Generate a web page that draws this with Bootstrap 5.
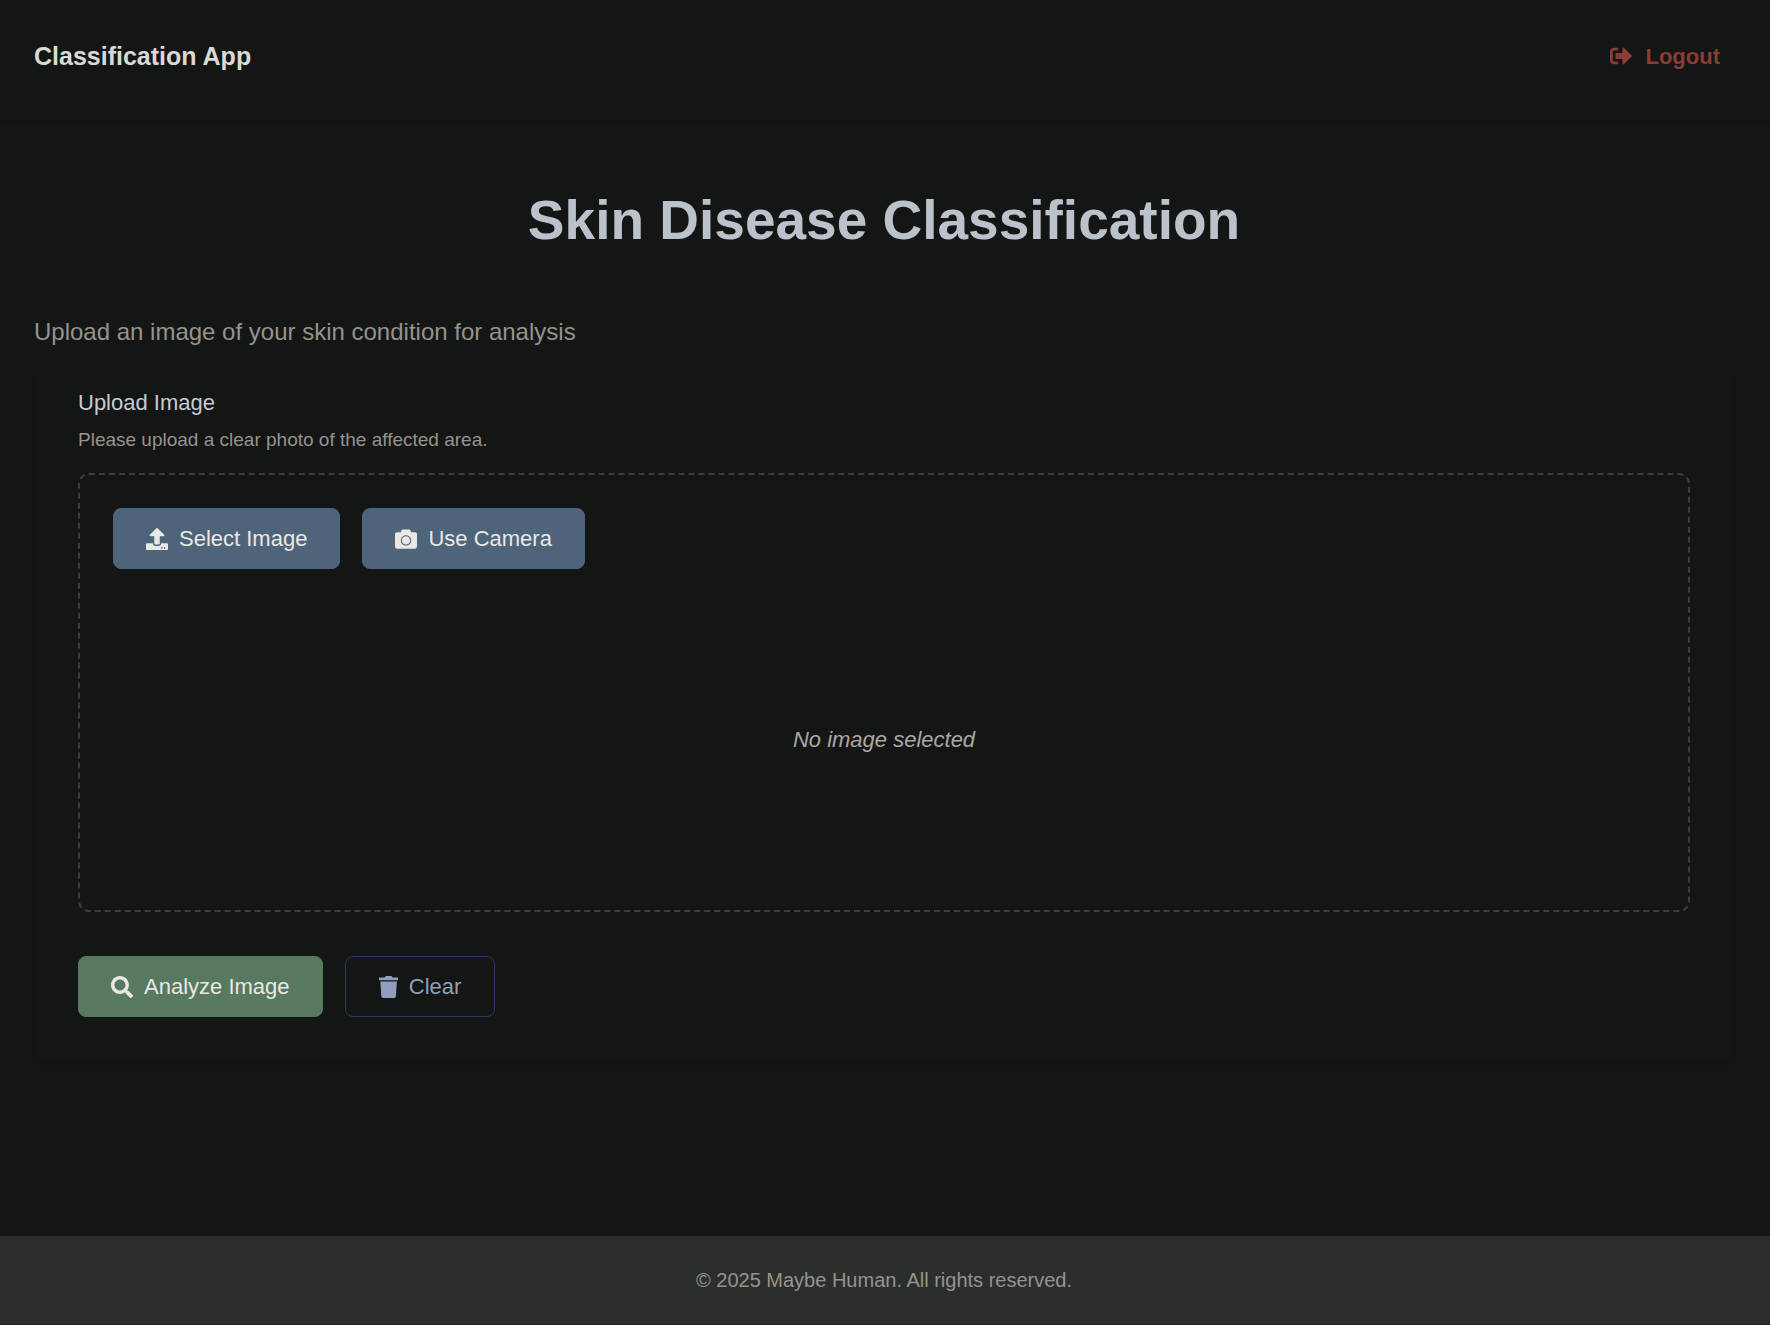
<!DOCTYPE html>
<html lang="en" data-bs-theme="dark">
<head>
<meta charset="utf-8">
<meta name="viewport" content="width=device-width, initial-scale=1">
<title>Skin Disease Classification</title>
<link href="https://cdn.jsdelivr.net/npm/bootstrap@5.3.0/dist/css/bootstrap.min.css" rel="stylesheet">
<style>
body { font-family: "Liberation Sans", Arial, sans-serif; font-size: 22px; line-height: 33px; background: #141615; color: #96938d; }
.app-nav { height: 120px; padding: 0 36px 8px 34px; box-shadow: 0 2px 4px rgba(0, 0, 0, .3); }
.app-brand { font-size: 25px; color: #dbd9d6; }
.logout-link { color: #8c3c35; padding: 0 14px; gap: 13px; }
.glyph { height: 22px; width: auto; fill: currentColor; flex: none; }
.page-main { padding: 67px 36px 0 34px; }
.page-title { font-size: 55px; line-height: 66px; color: #bcc2cc; margin-bottom: 61px; }
.page-intro { font-size: 24px; line-height: 36px; margin-bottom: 8px; }
.upload-card { padding: 28px 44px 44px; border-radius: 16px; box-shadow: 0 4px 12px rgba(0, 0, 0, .12); }
.upload-title { font-size: 22px; line-height: 33px; color: #c3cbd6; margin-bottom: 7px; }
.upload-hint { font-size: 19px; line-height: 28px; margin-bottom: 19px; }
.drop-zone { border: 2px dashed #3b3e3d; border-radius: 11px; padding: 33px; margin-bottom: 44px; }
.preview-area { min-height: 275px; margin-top: 33px; color: #aaa8a3; }
.btn-row { gap: 22px; }
.app-btn { display: inline-flex; align-items: center; gap: 11px; font-size: 22px; line-height: 33px; padding: 13px 32px; border-radius: 8px; }
.btn-pick { --bs-btn-color: #eae8e4; --bs-btn-bg: #4d647b; --bs-btn-border-color: #4d647b; --bs-btn-hover-bg: #435870; --bs-btn-hover-color: #fff; }
.btn-run { --bs-btn-color: #eae8e4; --bs-btn-bg: #587960; --bs-btn-border-color: #587960; --bs-btn-hover-bg: #4c6a54; --bs-btn-hover-color: #fff; }
.btn-wipe { --bs-btn-color: #8f9fbd; --bs-btn-border-color: #2e3566; --bs-btn-hover-bg: #1d2140; --bs-btn-hover-color: #b4c0d8; padding: 13px 33px; }
.app-footer { background: #2c2e2d; font-size: 20px; line-height: 30px; padding: 29px 36px 29px 34px; border-bottom: 1px solid #1e201f; }
</style>
<script defer src="https://cdn.jsdelivr.net/npm/bootstrap@5.3.0/dist/js/bootstrap.bundle.min.js"></script>
</head>
<body class="d-flex flex-column min-vh-100">
<nav class="app-nav d-flex align-items-center justify-content-between">
  <a class="app-brand fw-bold text-decoration-none" href="#">Classification App</a>
  <a class="logout-link d-flex align-items-center fw-bold text-decoration-none" href="#">
    <svg class="glyph" viewBox="0 0 512 512" aria-hidden="true"><path d="M497 273L329 441c-15 15-41 4.5-41-17v-96H152c-13.3 0-24-10.7-24-24v-96c0-13.3 10.7-24 24-24h136V88c0-21.4 25.9-32 41-17l168 168c9.3 9.4 9.3 24.6 0 34zM192 436v-40c0-6.6-5.4-12-12-12H96c-17.7 0-32-14.3-32-32V160c0-17.7 14.3-32 32-32h84c6.6 0 12-5.4 12-12V76c0-6.6-5.4-12-12-12H96c-53 0-96 43-96 96v192c0 53 43 96 96 96h84c6.6 0 12-5.4 12-12z"/></svg>
    <span>Logout</span>
  </a>
</nav>
<main class="page-main flex-grow-1">
  <h1 class="page-title fw-bold text-center">Skin Disease Classification</h1>
  <p class="page-intro">Upload an image of your skin condition for analysis</p>
  <section class="upload-card">
    <h2 class="upload-title fw-normal">Upload Image</h2>
    <p class="upload-hint">Please upload a clear photo of the affected area.</p>
    <div class="drop-zone">
      <div class="btn-row d-flex flex-wrap">
        <button type="button" class="btn app-btn btn-pick">
          <svg class="glyph" viewBox="0 0 512 512" aria-hidden="true"><path d="M296 384h-80c-13.3 0-24-10.7-24-24V192h-87.7c-17.8 0-26.7-21.5-14.1-34.1L242.3 5.7c7.5-7.5 19.8-7.5 27.3 0l152.2 152.2c12.6 12.6 3.7 34.1-14.1 34.1H320v168c0 13.3-10.7 24-24 24zm216-8v112c0 13.3-10.7 24-24 24H24c-13.3 0-24-10.7-24-24V376c0-13.3 10.7-24 24-24h136v8c0 30.9 25.1 56 56 56h80c30.9 0 56-25.1 56-56v-8h136c13.3 0 24 10.7 24 24zm-124 88c0-11-9-20-20-20s-20 9-20 20 9 20 20 20 20-9 20-20zm64 0c0-11-9-20-20-20s-20 9-20 20 9 20 20 20 20-9 20-20z"/></svg>
          Select Image
        </button>
        <button type="button" class="btn app-btn btn-pick">
          <svg class="glyph" viewBox="0 0 512 512" aria-hidden="true"><path d="M512 144v288c0 26.5-21.5 48-48 48H48c-26.5 0-48-21.5-48-48V144c0-26.5 21.5-48 48-48h88l12.3-32.9c7-18.7 24.9-31.1 44.9-31.1h125.5c20 0 37.9 12.4 44.9 31.1L376 96h88c26.5 0 48 21.5 48 48zM376 288c0-66.2-53.8-120-120-120s-120 53.8-120 120 53.8 120 120 120 120-53.8 120-120zm-24 0c0 53-43 96-96 96s-96-43-96-96 43-96 96-96 96 43 96 96z"/></svg>
          Use Camera
        </button>
      </div>
      <div class="preview-area d-flex align-items-center justify-content-center fst-italic">No image selected</div>
    </div>
    <div class="btn-row d-flex flex-wrap">
      <button type="button" class="btn app-btn btn-run">
        <svg class="glyph" viewBox="0 0 512 512" aria-hidden="true"><path d="M505 442.7L405.3 343c-4.5-4.5-10.6-7-17-7H372c27.6-35.3 44-79.7 44-128C416 93.1 322.9 0 208 0S0 93.1 0 208s93.1 208 208 208c48.3 0 92.7-16.4 128-44v16.3c0 6.4 2.5 12.5 7 17l99.7 99.7c9.4 9.4 24.6 9.4 33.9 0l28.3-28.3c9.4-9.4 9.4-24.6.1-34zM208 336c-70.7 0-128-57.2-128-128 0-70.7 57.2-128 128-128 70.7 0 128 57.2 128 128 0 70.7-57.2 128-128 128z"/></svg>
        Analyze Image
      </button>
      <button type="button" class="btn app-btn btn-wipe">
        <svg class="glyph" viewBox="0 0 448 512" aria-hidden="true"><path d="M432 32H312l-9.4-18.7A24 24 0 0 0 281.1 0H166.8a23.72 23.72 0 0 0-21.4 13.3L136 32H16A16 16 0 0 0 0 48v32a16 16 0 0 0 16 16h416a16 16 0 0 0 16-16V48a16 16 0 0 0-16-16zM53.2 467a48 48 0 0 0 47.9 45h245.8a48 48 0 0 0 47.9-45L416 128H32z"/></svg>
        Clear
      </button>
    </div>
  </section>
</main>
<footer class="app-footer text-center">© 2025 Maybe Human. All rights reserved.</footer>
</body>
</html>
